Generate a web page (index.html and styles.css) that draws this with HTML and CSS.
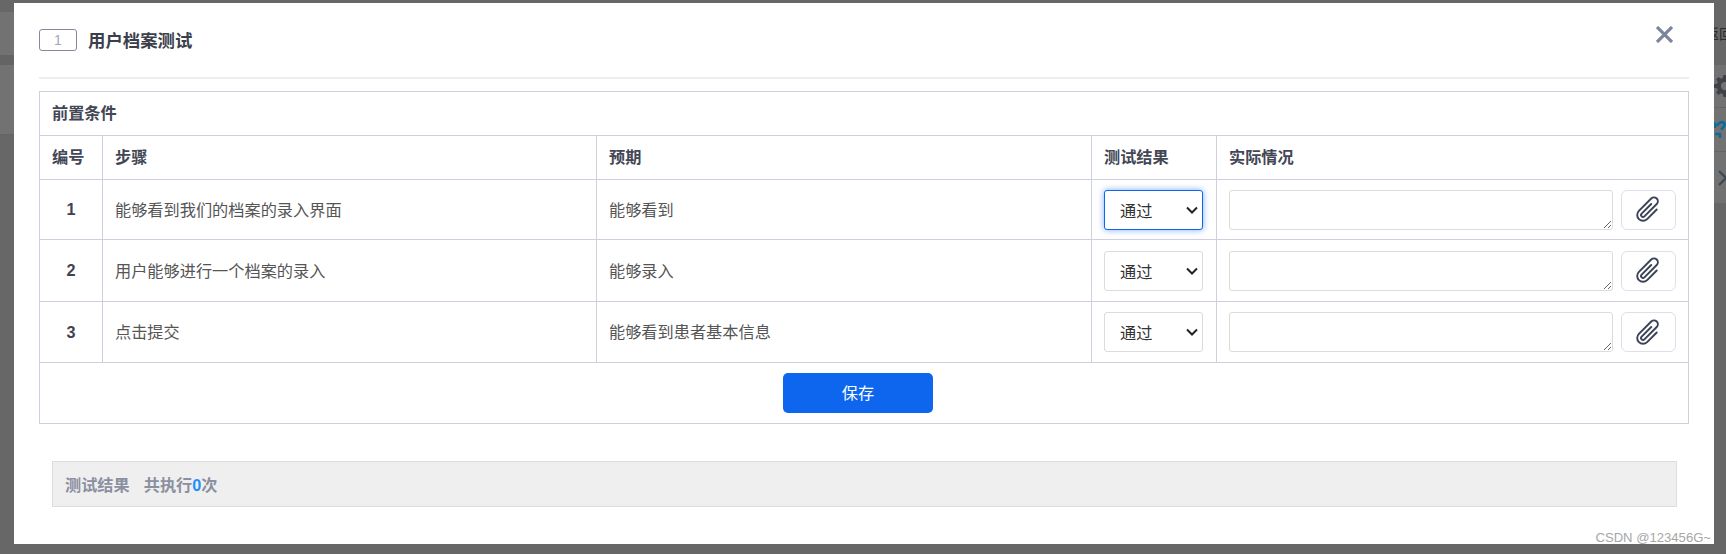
FILE: index.html
```html
<!DOCTYPE html>
<html lang="zh-CN">
<head>
<meta charset="utf-8">
<title>用户档案测试</title>
<link rel="stylesheet" href="styles.css">
</head>
<body>
<div class="backdrop">
  <div class="side">
    <div class="side-top"><span class="side-back">返回</span></div>
    <div class="side-row side-gear">
      <svg width="22" height="22" viewBox="0 0 16 16"><path fill="#3f4247" fill-rule="evenodd" d="M6.8 0h2.4l.4 2.2 1.3.6 1.9-1.3 1.7 1.7-1.3 1.9.6 1.3 2.2.4v2.4l-2.2.4-.6 1.3 1.3 1.9-1.7 1.7-1.9-1.3-1.3.6-.4 2.2H6.8l-.4-2.2-1.3-.6-1.9 1.3-1.7-1.7 1.3-1.9-.6-1.3L0 9.2V6.8l2.2-.4.6-1.3-1.3-1.9 1.7-1.7 1.9 1.3 1.3-.6zM8 5a3 3 0 1 0 0 6 3 3 0 0 0 0-6z"/></svg>
    </div>
    <div class="side-row side-link">
      <svg width="12" height="20" viewBox="0 0 12 20" fill="none" stroke="#0f6a9c" stroke-width="2.6"><path d="M1 2.5V8M3 6c1-3 5-5 7-3 1.5 2-1 5-3 6.500M1 14h6M6 13v5"/></svg>
    </div>
    <div class="side-row side-arrow">
      <svg width="12" height="18" viewBox="0 0 12 18" fill="none" stroke="#3f4a55" stroke-width="2.4"><path d="M2 2l7 7-7 7"/></svg>
    </div>
  </div>
  <div class="left-bands">
    <div class="band band-a"></div>
    <div class="band band-b"></div>
    <div class="band band-c"></div>
  </div>
</div>

<div class="modal">
  <header class="modal-head">
    <span class="badge">1</span>
    <h1 class="title">用户档案测试</h1>
    <svg class="close" width="17" height="17" viewBox="0 0 17 17" fill="none" stroke="#7b869c" stroke-width="3.2"><path d="M1 1l15 15M16 1L1 16"/></svg>
  </header>

  <table class="steps">
    <colgroup>
      <col class="c-no"><col class="c-step"><col class="c-exp"><col class="c-res"><col class="c-act">
    </colgroup>
    <thead>
      <tr class="row-head"><th colspan="5">前置条件</th></tr>
      <tr class="row-head"><th>编号</th><th>步骤</th><th>预期</th><th>测试结果</th><th>实际情况</th></tr>
    </thead>
    <tbody>
      <tr class="row-one">
        <td class="num">1</td>
        <td class="text">能够看到我们的档案的录入界面</td>
        <td class="text">能够看到</td>
        <td><select class="pick pick-focus"><option>通过</option><option>不通过</option></select></td>
        <td><div class="actual"><textarea class="note"></textarea><button class="clip" type="button"><svg width="31" height="31" viewBox="0 0 16 16" fill="#3c4356"><path transform="rotate(45 8 8)" d="M4.500 3a2.500 2.500 0 0 1 5 0v9a1.500 1.500 0 0 1-3 0V5a.5.5 0 0 1 1 0v7a.5.5 0 0 0 1 0V3a1.500 1.500 0 1 0-3 0v9a2.500 2.500 0 0 0 5 0V5a.5.5 0 0 1 1 0v7a3.500 3.500 0 1 1-7 0V3z"/></svg></button></div></td>
      </tr>
      <tr class="row-b">
        <td class="num">2</td>
        <td class="text">用户能够进行一个档案的录入</td>
        <td class="text">能够录入</td>
        <td><select class="pick"><option>通过</option><option>不通过</option></select></td>
        <td><div class="actual"><textarea class="note"></textarea><button class="clip" type="button"><svg width="31" height="31" viewBox="0 0 16 16" fill="#3c4356"><path transform="rotate(45 8 8)" d="M4.500 3a2.500 2.500 0 0 1 5 0v9a1.500 1.500 0 0 1-3 0V5a.5.5 0 0 1 1 0v7a.5.5 0 0 0 1 0V3a1.500 1.500 0 1 0-3 0v9a2.500 2.500 0 0 0 5 0V5a.5.5 0 0 1 1 0v7a3.500 3.500 0 1 1-7 0V3z"/></svg></button></div></td>
      </tr>
      <tr class="row-a">
        <td class="num">3</td>
        <td class="text">点击提交</td>
        <td class="text">能够看到患者基本信息</td>
        <td><select class="pick"><option>通过</option><option>不通过</option></select></td>
        <td><div class="actual"><textarea class="note"></textarea><button class="clip" type="button"><svg width="31" height="31" viewBox="0 0 16 16" fill="#3c4356"><path transform="rotate(45 8 8)" d="M4.500 3a2.500 2.500 0 0 1 5 0v9a1.500 1.500 0 0 1-3 0V5a.5.5 0 0 1 1 0v7a.5.5 0 0 0 1 0V3a1.500 1.500 0 1 0-3 0v9a2.500 2.500 0 0 0 5 0V5a.5.5 0 0 1 1 0v7a3.500 3.500 0 1 1-7 0V3z"/></svg></button></div></td>
      </tr>
      <tr class="row-a">
        <td colspan="5" class="save-cell"><button class="save" type="button">保存</button></td>
      </tr>
    </tbody>
  </table>

  <div class="result">
    <span>测试结果</span>
    <span>共执行<em class="count">0</em>次</span>
  </div>
</div>

<div class="watermark">CSDN @123456G~</div>
</body>
</html>
```
FILE: styles.css
```css
* { box-sizing: border-box; }

html, body {
  margin: 0;
  height: 100%;
  overflow: hidden;
}

body {
  font-family: "Noto Sans CJK SC", "Liberation Sans", sans-serif;
  font-size: 16.2px;
  color: #555;
  background: #676767;
}

/* dimmed page behind the dialog */
.backdrop {
  position: absolute;
  inset: 0;
  overflow: hidden;
}

.left-bands {
  position: absolute;
  left: 0;
  top: 12px;
  width: 14px;
  display: flex;
  flex-direction: column;
}

.band-a { height: 43px; background: #727272; }
.band-b { height: 10px; background: #646464; }
.band-c { height: 70px; background: #727272; border-bottom: 1px solid #656565; }

.side {
  position: absolute;
  left: 1714px;
  top: 0;
  width: 12px;
  overflow: hidden;
  display: flex;
  flex-direction: column;
}

.side-top {
  height: 65px;
  padding-top: 23px;
  white-space: nowrap;
}

.side-back {
  display: block;
  margin-left: -9px;
  width: 40px;
  font-size: 14px;
  line-height: 20px;
  color: #2b2b2b;
}

.side-row {
  display: flex;
  align-items: center;
  background: #727272;
  border-bottom: 1px solid #656565;
}

.side-gear { height: 43px; }
.side-link { height: 44px; }
.side-arrow { height: 51px; padding-left: 3px; border-bottom: 0; }
.side-row svg { flex: none; }

/* dialog */
.modal {
  position: absolute;
  left: 14px;
  top: 3px;
  width: 1700px;
  height: 541px;
  padding: 0 25px;
  background: #fff;
}

.modal-head {
  display: flex;
  align-items: center;
  height: 76px;
  border-bottom: 2px solid #eeeeee;
}

.badge {
  width: 38px;
  height: 22px;
  border: 1px solid #858a9b;
  border-radius: 3px;
  font-family: "Liberation Sans", sans-serif;
  font-size: 14px;
  line-height: 20px;
  text-align: center;
  color: #a3a8b8;
}

.title {
  margin: 0 0 2px 11px;
  font-size: 17.4px;
  font-weight: 700;
  color: #3b3f4c;
  flex: 1;
}

.close {
  align-self: flex-start;
  margin: 23px 16px 0 0;
}

/* table */
.steps {
  width: 1650px;
  margin-top: 12px;
  border-collapse: collapse;
  table-layout: fixed;
  border: 1px solid #cdd0dc;
}

.c-no { width: 63px; }
.c-step { width: 494px; }
.c-exp { width: 495px; }
.c-res { width: 125px; }

.steps th,
.steps td {
  border: 1px solid #cdd0dc;
  padding: 0 12px;
  text-align: left;
  vertical-align: middle;
}

.steps th {
  padding-bottom: 4px;
  font-weight: 700;
  color: #434755;
}

.steps .text { padding-bottom: 2px; }

.row-head { height: 44px; }
.row-one { height: 60px; }
.row-a { height: 61px; }
.row-b { height: 62px; }

.steps .num {
  text-align: center;
  font-family: "Liberation Sans", sans-serif;
  font-weight: 700;
  color: #3f4350;
}

.pick {
  display: block;
  width: 99px;
  height: 40px;
  padding: 0 0 0 15px;
  border: 1px solid #dcdcdc;
  border-radius: 3px;
  appearance: none;
  background: #fff url("data:image/svg+xml,%3Csvg xmlns='http://www.w3.org/2000/svg' width='12' height='8' viewBox='0 0 12 8'%3E%3Cpath d='M1 1.500L6 6.500l5-5' fill='none' stroke='%23222' stroke-width='2'/%3E%3C/svg%3E") no-repeat right 4px center;
  font: inherit;
  color: #333;
  outline: 0;
}

.pick-focus {
  border-color: #0d66ed;
  box-shadow: 0 0 6px rgba(13, 102, 237, .55);
}

.actual {
  display: flex;
  gap: 8px;
}

.note {
  display: block;
  width: 384px;
  height: 40px;
  border: 1px solid #dcdcdc;
  border-radius: 3px;
  background: #fff;
  outline: 0;
}

.clip {
  display: flex;
  align-items: center;
  justify-content: center;
  width: 55px;
  height: 40px;
  padding: 0;
  border: 1px solid #dde0ea;
  border-radius: 6px;
  background: #fff;
}

.steps .save-cell {
  text-align: center;
  padding-right: 24px;
}

.save {
  width: 150px;
  height: 40px;
  padding: 0 0 2px;
  border: 0;
  border-radius: 5px;
  background: #0d66ed;
  color: #fff;
  font: inherit;
  vertical-align: middle;
}

/* result bar */
.result {
  display: flex;
  gap: 14px;
  align-items: center;
  height: 46px;
  margin: 37px 12px 0 13px;
  padding-left: 12px;
  border: 1px solid #dddddd;
  background: #efefef;
  font-weight: 700;
  color: #8b90a0;
}

.count {
  font-style: normal;
  font-family: "Liberation Sans", sans-serif;
  color: #1e90ff;
}

.watermark {
  position: absolute;
  right: 15px;
  top: 530px;
  font-family: "Liberation Sans", sans-serif;
  font-size: 13.1px;
  line-height: 16px;
  color: #a6a6a6;
  white-space: nowrap;
}
```
